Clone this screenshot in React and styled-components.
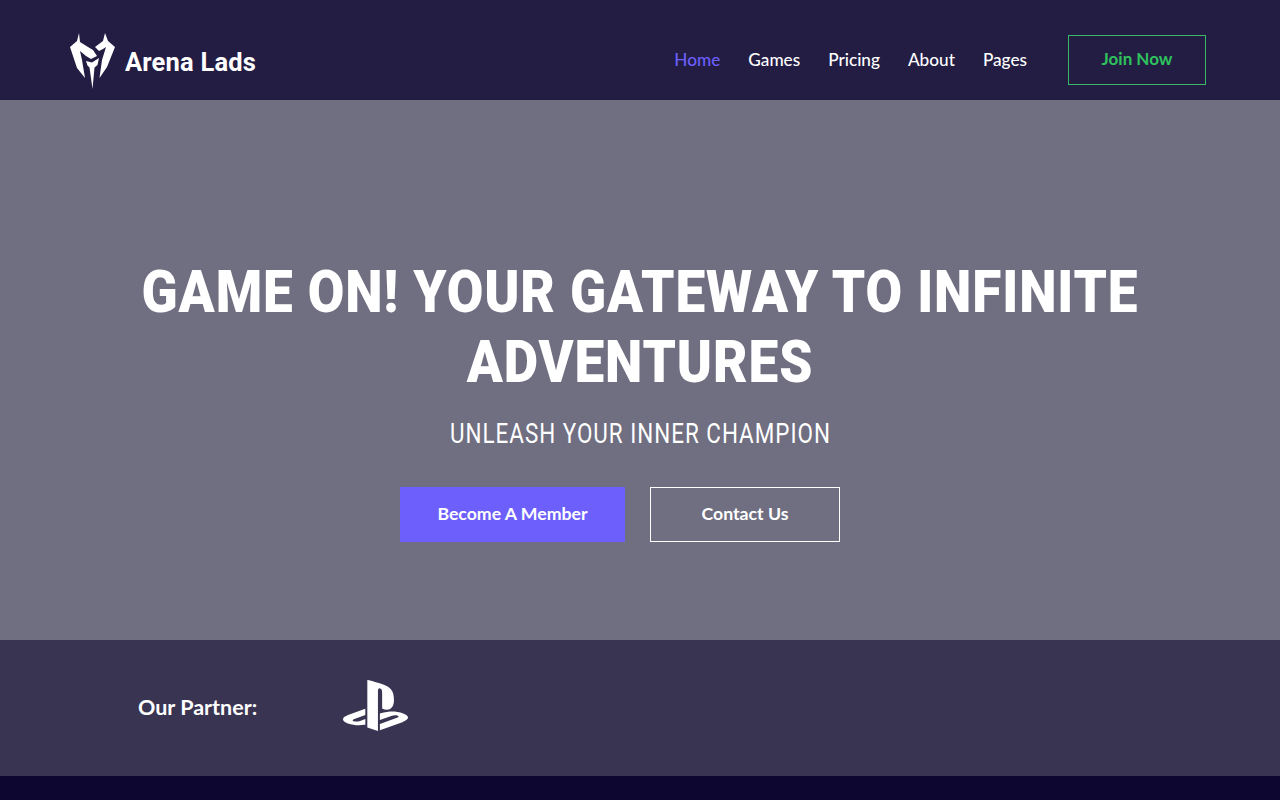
import React from "react";
import styled, { createGlobalStyle } from "styled-components";
import { SiPlaystation } from "react-icons/si";

const GlobalStyle = createGlobalStyle`
  html, body {
    margin: 0;
    padding: 0;
    background: #0d0630;
    font-family: "Lato", "Open Sans", sans-serif;
  }
  * { box-sizing: border-box; }
`;

const Page = styled.div`
  width: 100%;
  height: 800px;
  overflow: hidden;
  display: flex;
  flex-direction: column;
`;

const Header = styled.header`
  height: 100px;
  flex: none;
  background: #231d44;
  display: flex;
  align-items: center;
  justify-content: space-between;
  padding: 20px 74px 0 69px;
`;

const Brand = styled.a`
  display: flex;
  align-items: center;
  gap: 8px;
  color: #fff;
  text-decoration: none;
`;

const BrandName = styled.span`
  font-family: "Roboto", sans-serif;
  font-weight: 700;
  font-size: 26px;
  line-height: 30px;
  margin-top: 3px;
  letter-spacing: 0.2px;
  transform: scaleX(0.98);
  transform-origin: left center;
  width: 132px;
  white-space: nowrap;
`;

const Nav = styled.nav`
  display: flex;
  align-items: center;
`;

const NavLink = styled.a`
  font-size: 17.2px;
  line-height: 20px;
  font-weight: 500;
  color: ${(p) => (p.$active ? "#6c5ffc" : "#fff")};
  margin-right: 28px;
  text-decoration: none;
`;

const JoinButton = styled.a`
  width: 138px;
  height: 50px;
  margin-left: 13px;
  border: 1px solid #3bb866;
  color: #2fc15c;
  font-size: 17px;
  font-weight: 700;
  display: flex;
  align-items: center;
  justify-content: center;
  padding-bottom: 3px;
`;

const Hero = styled.section`
  height: 540px;
  flex: none;
  background: #706e81;
  display: flex;
  flex-direction: column;
  align-items: center;
  color: #fff;
  padding-top: 157px;
`;

const Title = styled.h1`
  margin: 0;
  width: 1200px;
  text-align: center;
  font-family: "Roboto", sans-serif;
  font-weight: 900;
  font-size: 60px;
  line-height: 70px;
  letter-spacing: 1px;
  text-transform: uppercase;
  transform: scaleX(0.885);
`;

const Subtitle = styled.p`
  margin: 21px 0 0;
  font-family: "Roboto", sans-serif;
  font-size: 27px;
  line-height: 32px;
  letter-spacing: 1.2px;
  font-weight: 400;
  transform: scaleX(0.83);
  white-space: nowrap;
`;

const Actions = styled.div`
  display: flex;
  gap: 25px;
  margin-top: 37px;
  margin-right: 40px;
`;

const ActionButton = styled.a`
  height: 55px;
  width: ${(p) => p.$width}px;
  display: flex;
  align-items: center;
  justify-content: center;
  padding-bottom: 3px;
  font-size: 17.7px;
  font-weight: 700;
  color: #fff;
  background: ${(p) => (p.$filled ? "#6c5ffc" : "transparent")};
  border: ${(p) => (p.$filled ? "none" : "1px solid #fff")};
`;

const Partners = styled.section`
  height: 136px;
  flex: none;
  background: #3a3453;
  display: flex;
  align-items: center;
  padding-left: 138px;
  color: #fff;
`;

const PartnerLabel = styled.span`
  font-size: 21.5px;
  font-weight: 700;
  width: 205px;
  margin-bottom: 3px;
`;

const PartnerLogo = styled(SiPlaystation)`
  margin-bottom: 6px;
`;

const Footer = styled.footer`
  flex: 1;
  background: #0d0630;
`;

function Logo() {
  return (
    <svg width="48" height="58" viewBox="5 5 48 58" fill="#fff" aria-hidden="true">
      {/* left wing with the band running into the knot */}
      <path d="M15 7 L16 16 L24 21 L29 24 L33 30 L27 33 L22 30 L16 25 L18 34 L21 52 L13 42 L6 21 L13 15 Z" />
      {/* right wing */}
      <path d="M41 7 L39 15 L31 21 L35 25 L39 23 L42 21 L38 34 L35.5 52 L43 41 L51 21 L44 15 Z" />
      {/* centre spike */}
      <path d="M22 35 L28 36.5 L35 32 L33.5 39 L30.5 41.5 L28.5 63 L25.5 41.5 L23.5 39.5 Z" />
    </svg>
  );
}

export default function App() {
  return (
    <Page>
      <GlobalStyle />
      <Header>
        <Brand>
          <Logo />
          <BrandName>Arena Lads</BrandName>
        </Brand>
        <Nav>
          <NavLink $active>Home</NavLink>
          <NavLink>Games</NavLink>
          <NavLink>Pricing</NavLink>
          <NavLink>About</NavLink>
          <NavLink>Pages</NavLink>
          <JoinButton>Join Now</JoinButton>
        </Nav>
      </Header>
      <Hero>
        <Title>Game On! Your Gateway to Infinite Adventures</Title>
        <Subtitle>UNLEASH YOUR INNER CHAMPION</Subtitle>
        <Actions>
          <ActionButton $filled $width={225}>Become A Member</ActionButton>
          <ActionButton $width={190}>Contact Us</ActionButton>
        </Actions>
      </Hero>
      <Partners>
        <PartnerLabel>Our Partner:</PartnerLabel>
        <PartnerLogo size={65} color="#fff" />
      </Partners>
      <Footer />
    </Page>
  );
}
